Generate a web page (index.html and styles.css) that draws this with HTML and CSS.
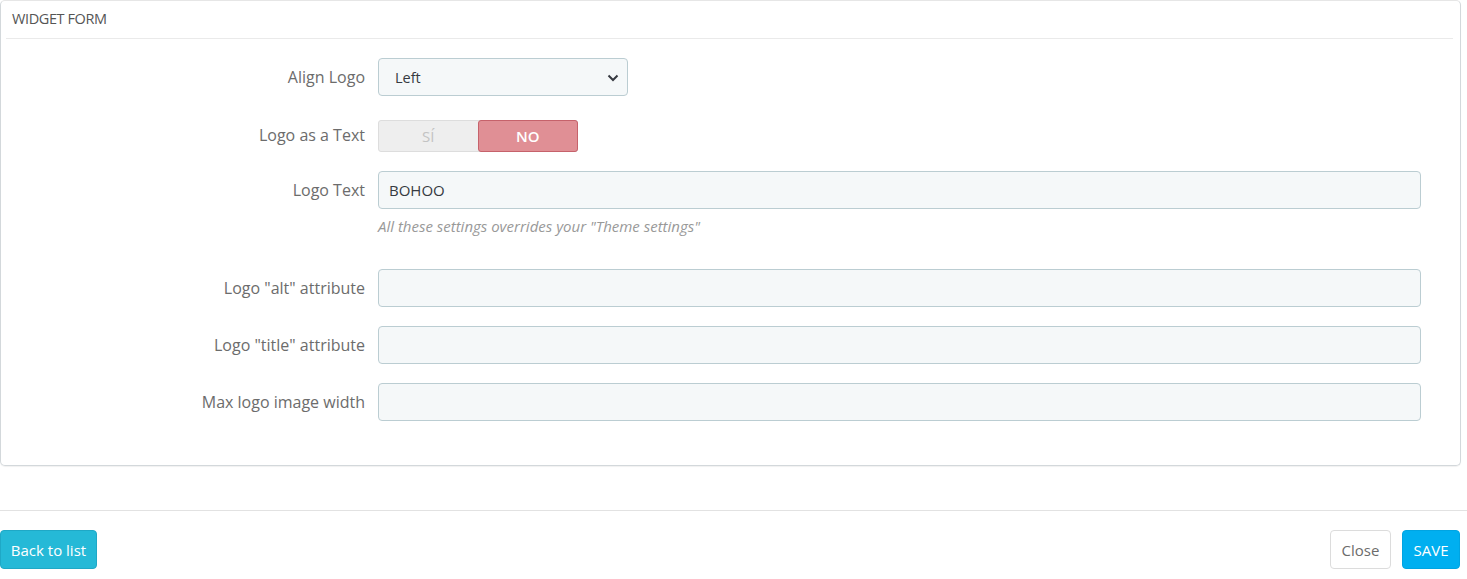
FILE: index.html
```html
<!DOCTYPE html>
<html lang="es">
<head>
    <meta charset="UTF-8">
    <meta name="viewport" content="width=device-width, initial-scale=1.0">
    <title>Widget form</title>
    <link rel="stylesheet" href="styles.css">
</head>
<body>
    <div class="panel">
        <div class="panel-heading">WIDGET FORM</div>
        <div class="form-body">
            <div class="form-row row-select">
                <label class="form-label">Align Logo</label>
                <div class="select-wrap">
                    <select class="form-select">
                        <option>Left</option>
                        <option>Center</option>
                        <option>Right</option>
                    </select>
                    <svg class="chevron" width="12" height="8" viewBox="0 0 12 8"><path d="M1.5 1.5 L6 6 L10.5 1.5" fill="none" stroke="#363a41" stroke-width="2"/></svg>
                </div>
            </div>
            <div class="form-row row-toggle">
                <label class="form-label">Logo as a Text</label>
                <div class="switch">
                    <span class="switch-yes">SÍ</span>
                    <span class="switch-no">NO</span>
                </div>
            </div>
            <div class="form-row row-text">
                <label class="form-label">Logo Text</label>
                <div class="control">
                    <input type="text" class="form-input" value="BOHOO">
                    <p class="help">All these settings overrides your "Theme settings"</p>
                </div>
            </div>
            <div class="form-row row-alt">
                <label class="form-label">Logo "alt" attribute</label>
                <input type="text" class="form-input">
            </div>
            <div class="form-row">
                <label class="form-label">Logo "title" attribute</label>
                <input type="text" class="form-input">
            </div>
            <div class="form-row row-last">
                <label class="form-label">Max logo image width</label>
                <input type="text" class="form-input">
            </div>
        </div>
    </div>

    <div class="footer">
        <button class="btn btn-back">Back to list</button>
        <div class="footer-right">
            <button class="btn btn-close">Close</button>
            <button class="btn btn-save">SAVE</button>
        </div>
    </div>
</body>
</html>
```

FILE: styles.css
```css
*{
    margin: 0;
    padding: 0;
    box-sizing: border-box;
}
body{
    font-family: "Open Sans", "Noto Sans", sans-serif;
    font-size: 14px;
    color: #363a41;
    background: #fff;
}
.panel{
    width: 1461px;
    height: 466px;
    border: 1px solid #d3d8db;
    border-top-color: #e6e6e6;
    border-radius: 5px;
    box-shadow: 0 1px 1px rgba(0,0,0,.06);
    padding: 0 7px 0 5px;
}
.panel-heading{
    height: 38px;
    line-height: 36px;
    padding-left: 6px;
    font-size: 14.5px;
    letter-spacing: -0.4px;
    color: #555;
    border-bottom: 1px solid #eaeaea;
}
.form-body{
    padding-top: 19px;
}
.form-row{
    display: flex;
    align-items: flex-start;
    margin-bottom: 19px;
}
.form-label{
    width: 372px;
    flex: none;
    text-align: right;
    padding-right: 13px;
    line-height: 38px;
    font-size: 16px;
    color: #6c6c6c;
}
.row-select{
    margin-bottom: 24px;
}
.row-toggle .form-label{
    line-height: 31px;
}
.select-wrap{
    position: relative;
    width: 250px;
}
.form-select{
    appearance: none;
    -webkit-appearance: none;
    width: 250px;
    height: 38px;
    padding: 0 16px;
    background: #f5f8f9;
    border: 1px solid #bbcdd2;
    border-radius: 4px;
    font-family: inherit;
    font-size: 14.5px;
    color: #363a41;
}
.chevron{
    position: absolute;
    right: 9px;
    top: 16px;
}
.switch{
    display: flex;
    width: 200px;
    height: 32px;
    background: #eee;
    border: 1px solid #ddd;
    border-radius: 3px;
    font-size: 15px;
}
.switch span{
    flex: 1;
    text-align: center;
    line-height: 30px;
}
.switch-yes{
    color: #c3c3c3;
}
.switch-no{
    background: #e08f95;
    border: 1px solid #c6626b;
    border-radius: 3px;
    margin: -1px -1px -1px 0;
    line-height: 30px;
    color: #fff;
    font-weight: 600;
}
.control{
    flex: none;
}
.form-input{
    width: 1043px;
    height: 38px;
    padding: 0 10px;
    background: #f5f8f9;
    border: 1px solid #bbcdd2;
    border-radius: 4px;
    font-family: inherit;
    font-size: 15px;
    color: #363a41;
}
.help{
    margin-top: 7px;
    font-size: 15px;
    font-style: italic;
    line-height: 20px;
    color: #999;
}
.row-text{
    margin-bottom: 33px;
}
.row-last{
    margin-bottom: 0;
}
.footer{
    margin-top: 44px;
    border-top: 1px solid #e2e2e2;
    padding: 19px 7px 0 0;
    display: flex;
    justify-content: space-between;
}
.footer-right{
    display: flex;
    gap: 11px;
}
.btn{
    height: 39px;
    border-radius: 4px;
    font-family: inherit;
    font-size: 15px;
    cursor: pointer;
}
.btn-back{
    width: 97px;
    background: #25b9d7;
    border: 1px solid #1fa8c6;
    color: #fff;
}
.btn-close{
    width: 61px;
    background: #fff;
    border: 1px solid #dcdcdc;
    color: #6c6c6c;
}
.btn-save{
    width: 58px;
    background: #00aff0;
    border: 1px solid #00a4e2;
    color: #fff;
}
```
